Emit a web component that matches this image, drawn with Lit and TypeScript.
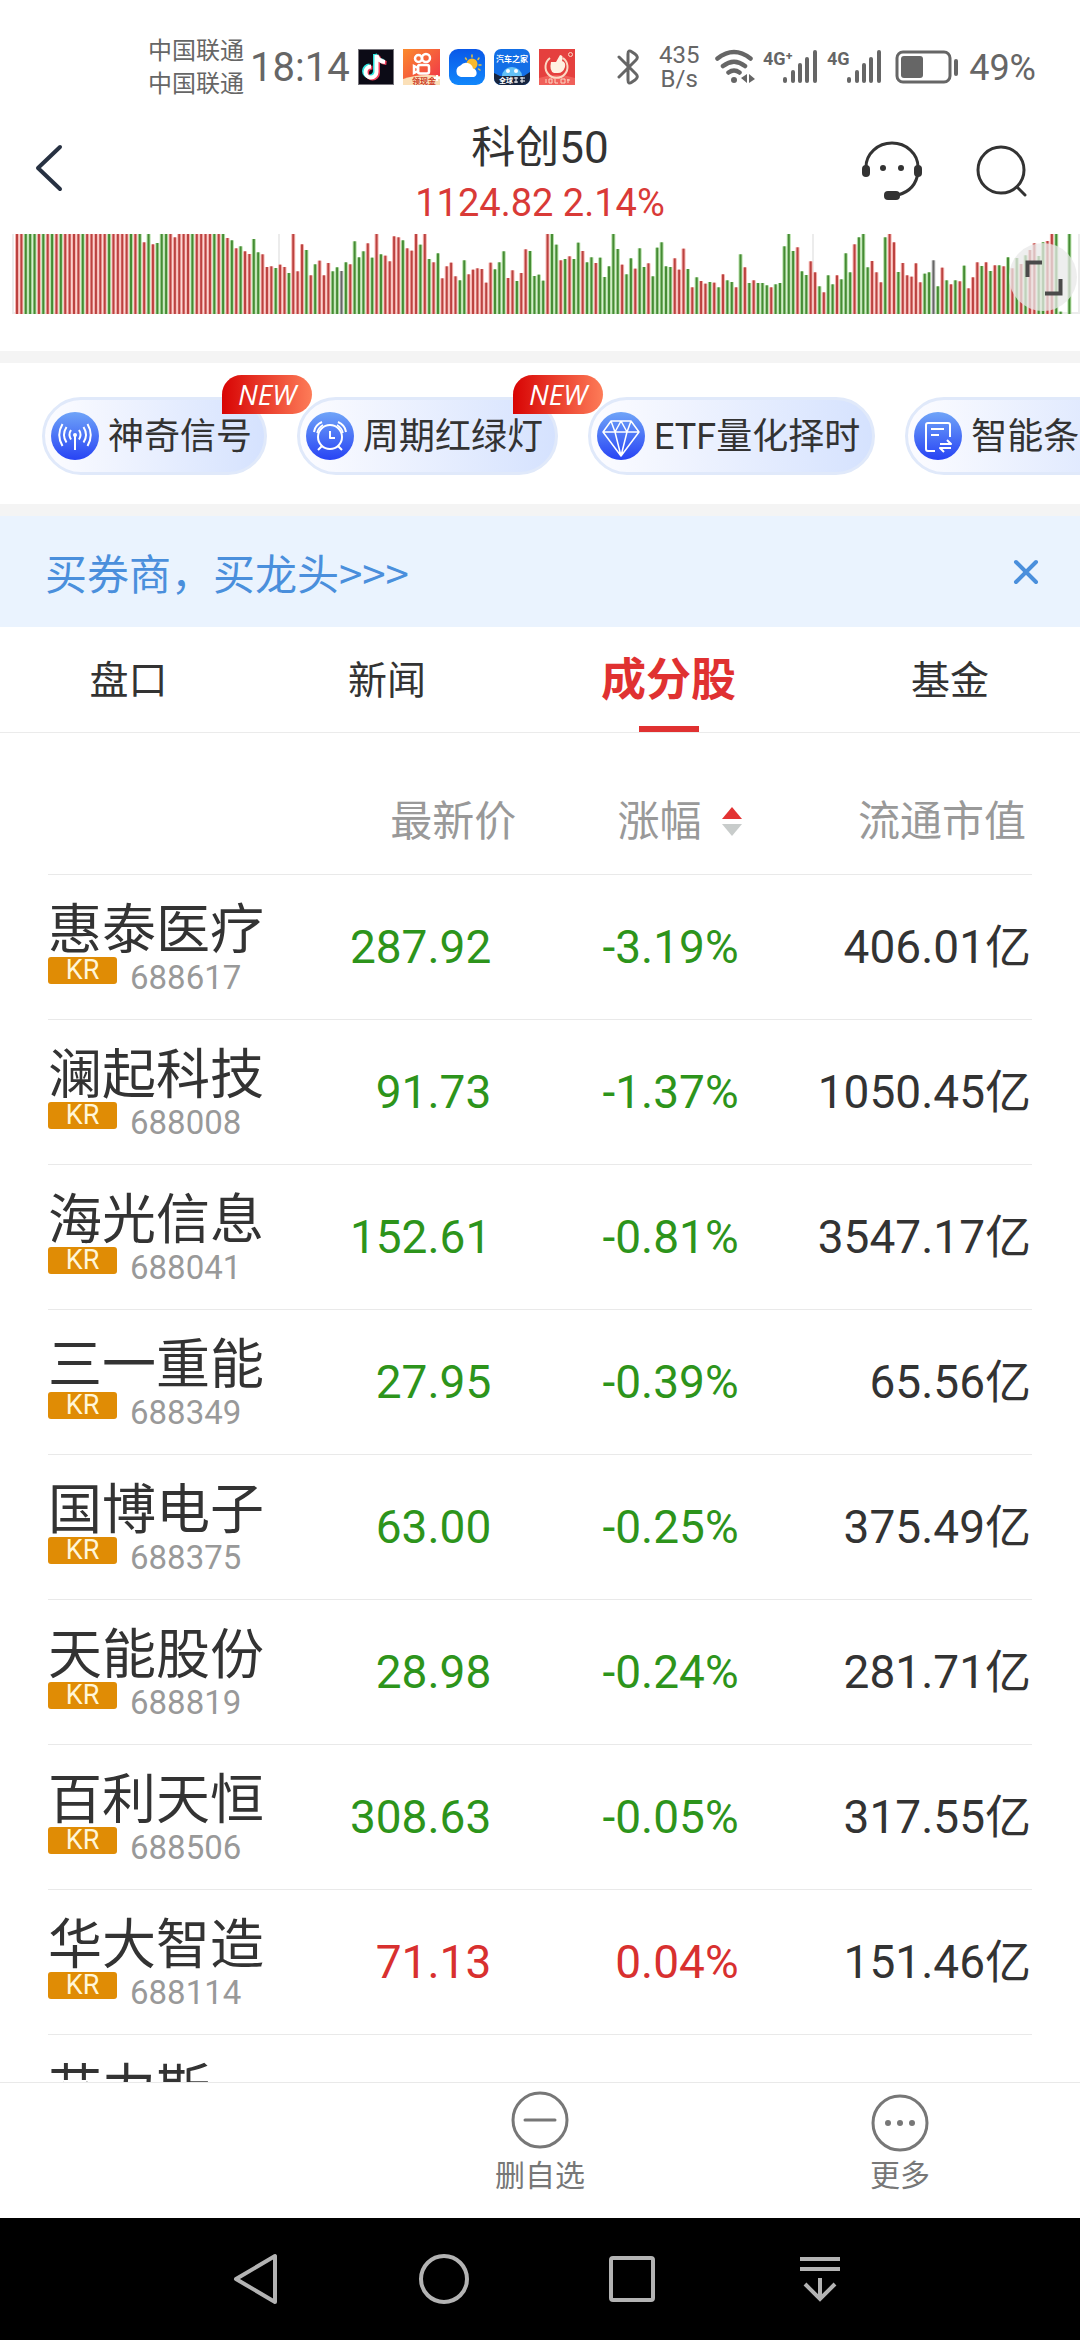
import { LitElement, html, svg, css, nothing } from "lit";
import { customElement, state } from "lit/decorators.js";
import { classMap } from "lit/directives/class-map.js";

interface Stock {
  name: string;
  code: string;
  price: string;
  change: string;
  cap: string;
  trend: "up" | "down";
}

const STOCKS: Stock[] = [
  { name: "惠泰医疗", code: "688617", price: "287.92", change: "-3.19%", cap: "406.01亿", trend: "down" },
  { name: "澜起科技", code: "688008", price: "91.73", change: "-1.37%", cap: "1050.45亿", trend: "down" },
  { name: "海光信息", code: "688041", price: "152.61", change: "-0.81%", cap: "3547.17亿", trend: "down" },
  { name: "三一重能", code: "688349", price: "27.95", change: "-0.39%", cap: "65.56亿", trend: "down" },
  { name: "国博电子", code: "688375", price: "63.00", change: "-0.25%", cap: "375.49亿", trend: "down" },
  { name: "天能股份", code: "688819", price: "28.98", change: "-0.24%", cap: "281.71亿", trend: "down" },
  { name: "百利天恒", code: "688506", price: "308.63", change: "-0.05%", cap: "317.55亿", trend: "down" },
  { name: "华大智造", code: "688114", price: "71.13", change: "0.04%", cap: "151.46亿", trend: "up" },
  { name: "艾力斯", code: "", price: "", change: "", cap: "", trend: "up" },
];

// One entry per minute: direction letter, then the distance of the bar's top
// from the top edge in thirds of a pixel (27 is a full-height bar, 267 an empty one).
const VOLUME = `
r27 r27 g27 g27 g27 r27 g27 r27 g27 r27 g27 r27 r27 r27 r27 g27 r27 r27 r27 r27 r27 g27 r27 r27 r27 r27 g27 r27 g27
r52 g27 r58 g54 g27 g27 r27 r37 r27 r27 r27 g27 r27 r27 r27 r27 g27 r27 g27 r39 g46 r70 g64 r79 r87 g42 g82 r88 r126
r124 g129 r119 r126 g144 r27 r139 r58 g75 r151 g118 r107 r151 r114 g139 g127 k138 g112 r118 g49 g97
g79 r55 g98 r27 g88 r92 r109 r34 r37 g46 r70 r77 r27 g59 r27 g102 r112 g85 r160 r124 r113 r154 g166 g106 r148 r134
r130 r132 r173 r113 g133 g112 g79 r159 r136 g168 r144 r73 g78 g153 g149 g167 r27 g27 g59 r106 g102 r94 g102 g53 r78
g112 g97 r114 g98 g156 g124 g27 g72 r119 g148 g100 r131 g70 g126 r115 g154 g68 g52 g124 g126 r100 r134 r71 g132 r187
g157 r168 r176 g171 r173 g187
r148 g166 g171 r187 g88 r127 g174 r166 g174 g174 g181 r187 g178 g174 g64 g27 g78 r67 g139 g150 r109 r142 g184 r202
g151 g178 r151 g163 g85 g142 r58 g37 g27 g127 r108 r142 r172 g37 r27 r52 g141 r114 r151 r155 r115 r172 g146 g142 k106
g184 r128 g166 r178 g166 r169 g122 r190 r157 r112 g123 r112 g138 r121 g121 r124 g97 r130 g99 r117 g91 r75 r55 g93 g52
r48 r27 g27 g260 g267 g27`
  .trim()
  .split(/\s+/)
  .map((s) => ({ tone: s[0], height: (267 - Number(s.slice(1))) / 3 }));

const TONES: Record<string, [string, string]> = {
  r: ["#bb4240", "#f6b4b0"],
  g: ["#458b34", "#b4dfa6"],
  k: ["#666666", "#d0d0d0"],
};

const FONT = css`
  font-family: Roboto, "Noto Sans CJK SC", sans-serif;
`;

@customElement("phone-status")
class PhoneStatus extends LitElement {
  static styles = css`
    :host {
      display: block;
      color: #666;
      ${FONT}
    }
    .bar {
      display: flex;
      align-items: center;
      height: 66px;
      padding: 34px 44px 0 148px;
    }
    .carriers {
      padding-top: 2px;
      font-size: 24px;
      line-height: 33px;
      white-space: nowrap;
    }
    .time {
      margin-left: 6px;
      padding-top: 2px;
      font-size: 40px;
      line-height: 48px;
    }
    .apps {
      display: flex;
      gap: 9px;
      margin-left: 8px;
    }
    .right {
      display: flex;
      align-items: center;
      margin-left: auto;
    }
    .speed {
      width: 44px;
      margin: 0 14px 0 17px;
      font-size: 24px;
      line-height: 24px;
      text-align: center;
    }
    .percent {
      margin-left: 10px;
      padding-top: 2px;
      font-size: 36px;
      line-height: 42px;
    }
    svg {
      display: block;
      flex: none;
    }
    .signal {
      margin-left: 8px;
    }
    .battery {
      margin-left: 12px;
    }
  `;

  private signal(label: string) {
    return html`<svg class="signal" width="56" height="36" viewBox="0 0 56 36" fill="#666">
      <text x="0" y="16" font-size="18" font-weight="700" font-family="Roboto, sans-serif">${label}</text>
      <rect x="20" y="28" width="4" height="6" rx="2" />
      <rect x="28" y="21" width="4" height="13" rx="2" />
      <rect x="35" y="14" width="4" height="20" rx="2" />
      <rect x="42" y="8" width="4" height="26" rx="2" />
      <rect x="50" y="1" width="4" height="33" rx="2" />
    </svg>`;
  }

  render() {
    return html`<div class="bar">
      <div class="carriers"><div>中国联通</div><div>中国联通</div></div>
      <div class="time">18:14</div>
      <div class="apps">
        <svg width="36" height="36" viewBox="0 0 36 36">
          <rect x=".5" y=".5" width="35" height="35" fill="#0c0b16" stroke="#77757c" />
          <g fill="none" stroke-width="4">
            <path d="M18 6V23a5.500 5.500 0 1 1-5.500-5.500M18 6c1 4.500 4 6.500 8.500 7" stroke="#2fe3df" transform="translate(-1 -1)" />
            <path d="M18 6V23a5.500 5.500 0 1 1-5.500-5.500M18 6c1 4.500 4 6.500 8.500 7" stroke="#f0405c" transform="translate(2 1)" />
            <path d="M18 6V23a5.500 5.500 0 1 1-5.500-5.500M18 6c1 4.500 4 6.500 8.500 7" stroke="#fff" transform="translate(.5 0)" />
          </g>
        </svg>
        <svg width="37" height="36" viewBox="0 0 37 36">
          <defs>
            <linearGradient id="ks" x1="0" y1="0" x2="1" y2="1">
              <stop offset="0" stop-color="#fb8b2c" /><stop offset="1" stop-color="#f0304c" />
            </linearGradient>
          </defs>
          <rect width="37" height="36" fill="url(#ks)" />
          <g fill="none" stroke="#fff" stroke-width="2.500">
            <circle cx="15.500" cy="9.500" r="3.500" /><circle cx="23" cy="9" r="4" />
            <rect x="15" y="16" width="11" height="8.500" rx="2" />
            <path d="M15 19l-4-2v7l4-2z" />
          </g>
          <path d="M0 30q18-6 37-3v9H0z" fill="#fbe0b8" />
          <text x="9" y="35" font-size="8" font-weight="700" fill="#cc3a28" font-family="Noto Sans CJK SC, sans-serif">领现金</text>
          <path d="M34 26v6M31 29h6" stroke="#fff" stroke-width="2" />
        </svg>
        <svg width="36" height="36" viewBox="0 0 36 36">
          <defs>
            <linearGradient id="wx" x1="0" y1="0" x2="0" y2="1">
              <stop offset="0" stop-color="#0a58e8" /><stop offset="1" stop-color="#1187fb" />
            </linearGradient>
          </defs>
          <rect width="36" height="36" rx="9" fill="url(#wx)" />
          <g stroke="#e8c040" stroke-width="1.500" stroke-linecap="round">
            <path d="M23 6v2M30 9l-1 1.500M32 16h-2M16.500 9l1 1.500M31 21l-1.500-1" />
          </g>
          <circle cx="23" cy="15" r="5.500" fill="#f8b92c" />
          <path d="M12 28a6 6 0 0 1-.5-11.500A7 7 0 0 1 24 19.500a4.500 4.500 0 0 1 1 8.500z" fill="#fff" />
        </svg>
        <svg width="36" height="36" viewBox="0 0 36 36">
          <defs><clipPath id="car"><rect width="36" height="36" rx="7" /></clipPath></defs>
          <g clip-path="url(#car)">
            <rect width="36" height="36" fill="#136fe6" />
            <path d="M8 27a10 9 0 0 1 20 0z" fill="#63c1f6" />
            <circle cx="14" cy="22" r="2" fill="#fff" /><circle cx="22" cy="22" r="2" fill="#fff" />
            <path d="M0 24l6 3h24l6-4v13H0z" fill="#17253f" />
            <text x="2" y="13" font-size="8" font-weight="700" fill="#fff" font-family="Noto Sans CJK SC, sans-serif">汽车之家</text>
            <text x="5" y="34" font-size="7" font-weight="700" fill="#fff" font-family="Noto Sans CJK SC, sans-serif">全球</text>
            <path d="M20 29h4M22 28v6M20 33h4M26 29h5M28 28v6M26 32h5" stroke="#fff" />
          </g>
        </svg>
        <svg width="36" height="36" viewBox="0 0 36 36">
          <rect width="36" height="36" fill="#e5403e" />
          <path d="M0 29q18-6 36 0v7H0z" fill="#f0605a" />
          <path d="M11 9a11 11 0 1 0 13 0" fill="none" stroke="#fbd9c4" stroke-width="2" />
          <path d="M12 13h5l4-7q4 0 2 6 4 1 3 6-2 6-7 6h-4q-5-2-3-11z" fill="#fff1e2" />
          <circle cx="31.500" cy="5.500" r="2" fill="none" stroke="#fbd9c4" />
          <path d="M7 30v4M10 30h3v4h-3zM16 30v4h3M22 30h4v4h-4zM28 31h3M29 30v4" stroke="#fbd9c4" fill="none" />
        </svg>
      </div>
      <div class="right">
        <svg width="23" height="36" viewBox="0 0 23 36" fill="none" stroke="#666" stroke-width="3" stroke-linejoin="round" stroke-linecap="round">
          <path d="M2 8l17 17q3 3-1 6l-3 2q-4 3-4-2V5q0-5 4-2l3 2q4 3 1 6L2 28" />
        </svg>
        <div class="speed"><div>435</div><div>B/s</div></div>
        <svg width="40" height="36" viewBox="0 0 40 36" fill="none" stroke="#666" stroke-width="4.500" stroke-linecap="round">
          <path d="M2.500 9.500q16.500-13 33 0M8 17q11-8.500 22 0M13.500 23.500q5.500-4 11 0" />
          <circle cx="19" cy="31" r="3" fill="#666" stroke="none" />
          <path d="M32 25v9l-6-5zM34 34v-9l6 5z" fill="#666" stroke="none" />
        </svg>
        ${this.signal("4G⁺")} ${this.signal("4G")}
        <svg class="battery" width="64" height="36" viewBox="0 0 64 36">
          <rect x="2" y="3" width="53" height="30" rx="6" fill="none" stroke="#666" stroke-width="3" />
          <rect x="6" y="7" width="22" height="22" rx="3" fill="#666" />
          <rect x="59" y="10" width="4" height="17" rx="2" fill="#666" />
        </svg>
        <span class="percent">49%</span>
      </div>
    </div>`;
  }
}

@customElement("volume-chart")
class VolumeChart extends LitElement {
  static styles = css`
    :host {
      display: block;
      position: relative;
    }
    .plot {
      display: block;
      width: 100%;
      height: 80px;
    }
    .expand {
      position: absolute;
      top: 9px;
      right: 3px;
      width: 68px;
      height: 68px;
      padding: 0;
      border: 0;
      border-radius: 50%;
      background: rgba(232, 232, 232, 0.75);
    }
    .expand svg {
      display: block;
    }
  `;

  render() {
    const x = (i: number) => 17 + i * 4.385;
    return html`<svg class="plot" viewBox="0 0 1080 80" preserveAspectRatio="none" role="img" aria-label="成交量">
        ${[13, 279, 813, 1079].map((g) => svg`<rect x=${g - 1} y="0" width="2" height="80" fill="#ececec" />`)}
        <rect x="12" y="78" width="1068" height="2" fill="#ececec" />
        ${VOLUME.map(
          (b, i) => svg`<rect x=${x(i) - 2} y=${80 - b.height} width="4" height=${b.height} fill=${TONES[b.tone][1]} />
            <rect x=${x(i) - 1} y=${80 - b.height} width="2" height=${b.height} fill=${TONES[b.tone][0]} />`
        )}
      </svg>
      <button class="expand" aria-label="全屏">
        <svg width="68" height="68" viewBox="0 0 68 68" fill="none" stroke="#4a4a4a" stroke-width="4">
          <path d="M18.500 34V19.500H33M51.500 36v14.500H36" />
        </svg>
      </button>`;
  }
}

const CHIP_ICONS = {
  signal: svg`<circle cx="24" cy="23" r="2" fill="#fff" stroke="none" /><path d="M24 24v14" />
    <path d="M20 18q-3 4.500 0 9.500M28 18q3 4.500 0 9.500M15.500 15q-5 8 0 15.500M32.500 15q5 8 0 15.500M11.500 12q-6.500 11 0 22M36.500 12q6.500 11 0 22" />`,
  clock: svg`<circle cx="24" cy="25" r="12" /><path d="M24 19v7h5M16 34l-4 4M32 34l4 4M8 20q1-7 8-10M40 20q-1-7-8-10" />
    <path d="M11 21q1-5 6-8M37 21q-1-5-6-8" stroke-width="1.500" />`,
  diamond: svg`<path d="M14 9h20l8 11-18 24L6 20zM6 20h36M14 9l4 11 6-11 6 11 4-11M18 20l6 24 6-24" stroke-width="1.500" />`,
  sheet: svg`<path d="M21 39h-7a2 2 0 0 1-2-2V13a2 2 0 0 1 2-2h20a2 2 0 0 1 2 2v12M17 17h13M17 23h8" />
    <path d="M26 32h11l-4-4M37 36H26l4 4" />`,
};

const CHIPS: { label: string; icon: keyof typeof CHIP_ICONS; fresh: boolean }[] = [
  { label: "神奇信号", icon: "signal", fresh: true },
  { label: "周期红绿灯", icon: "clock", fresh: true },
  { label: "ETF量化择时", icon: "diamond", fresh: false },
  { label: "智能条件单", icon: "sheet", fresh: false },
];

@customElement("tool-chips")
class ToolChips extends LitElement {
  static styles = css`
    :host {
      display: block;
      overflow: hidden;
    }
    .row {
      display: flex;
      gap: 30px;
      padding: 34px 42px 29px;
    }
    .chip {
      position: relative;
      flex: none;
      display: flex;
      align-items: center;
      gap: 9px;
      height: 78px;
      padding: 0 12px 0 6px;
      border: 3px solid #e0e9fa;
      border-radius: 39px;
      background: linear-gradient(90deg, #fcfcff, #d5e2fe);
      color: #333;
      ${FONT}
      font-size: 36px;
      line-height: 50px;
      white-space: nowrap;
    }
    .label {
      padding-top: 2px;
    }
    .disc {
      width: 48px;
      height: 48px;
      border-radius: 50%;
      background: linear-gradient(#6fa4f8, #2743f4);
    }
    .disc svg {
      display: block;
      fill: none;
      stroke: #fff;
      stroke-width: 2;
      stroke-linejoin: round;
    }
    .badge {
      position: absolute;
      top: -25px;
      right: -48px;
      z-index: 1;
      width: 90px;
      border-radius: 20px 20px 20px 0;
      background: linear-gradient(90deg, #d80404, #fd7c58);
      color: #fff;
      font-family: "Open Sans", sans-serif;
      font-size: 28px;
      line-height: 39px;
      font-style: italic;
      font-weight: 500;
      text-align: center;
    }
  `;

  render() {
    return html`<div class="row">
      ${CHIPS.map(
        (c) => html`<button class="chip">
          <span class="disc"><svg width="48" height="48" viewBox="0 0 48 48">${CHIP_ICONS[c.icon]}</svg></span>
          <span class="label">${c.label}</span>
          ${c.fresh ? html`<span class="badge">NEW</span>` : nothing}
        </button>`
      )}
    </div>`;
  }
}

@customElement("stock-table")
class StockTable extends LitElement {
  static styles = css`
    :host {
      display: block;
      padding: 36px 48px 0;
      ${FONT}
    }
    .table {
      width: 100%;
      table-layout: fixed;
      border-collapse: separate;
      border-spacing: 0;
      color: #333;
    }
    .name-col {
      width: 22%;
    }
    .price-col {
      width: 26%;
    }
    .change-col {
      width: 23%;
    }
    .head {
      height: 106px;
      padding: 0;
      border-bottom: 1px solid #e9e9e9;
      color: #999;
      font-size: 42px;
      font-weight: 400;
      line-height: 60px;
      text-align: right;
      box-sizing: border-box;
      white-space: nowrap;
    }
    .head-price {
      padding-right: 4px;
    }
    .head-change {
      padding-right: 5px;
    }
    .head-cap {
      padding-right: 6px;
    }
    .sort {
      display: inline-flex;
      align-items: center;
      gap: 20px;
      padding: 0;
      border: 0;
      background: none;
      color: inherit;
      font: inherit;
    }
    .cell {
      height: 145px;
      padding: 0;
      border-bottom: 1px solid #e9e9e9;
      box-sizing: border-box;
      font-size: 46px;
      line-height: 60px;
      text-align: right;
      white-space: nowrap;
    }
    .title {
      padding-top: 30px;
      font-weight: 400;
      text-align: left;
      vertical-align: top;
    }
    .name {
      font-size: 54px;
      line-height: 52px;
    }
    .meta {
      display: flex;
      align-items: flex-start;
      gap: 13px;
    }
    .tag {
      width: 69px;
      border-radius: 3px;
      background: #e08c05;
      color: #fff6d8;
      font-size: 27px;
      line-height: 27px;
      text-align: center;
    }
    .code {
      color: #999;
      font-size: 33px;
      line-height: 42px;
    }
    .price {
      padding-right: 29px;
    }
    .change {
      padding-right: 8px;
    }
    .cap {
      padding-right: 1px;
    }
    .up {
      color: #d8302f;
    }
    .down {
      color: #2d941b;
    }
  `;

  render() {
    return html`<table class="table">
      <colgroup>
        <col class="name-col" /><col class="price-col" /><col class="change-col" /><col />
      </colgroup>
      <thead>
        <tr>
          <td class="head"></td>
          <th class="head head-price" scope="col">最新价</th>
          <th class="head head-change" scope="col">
            <button class="sort">涨幅
              <svg width="20" height="30" viewBox="0 0 20 30"><path d="M10 0l10 12H0z" fill="#e23333" /><path d="M0 17h20L10 29z" fill="#c8cccb" /></svg>
            </button>
          </th>
          <th class="head head-cap" scope="col">流通市值</th>
        </tr>
      </thead>
      <tbody>
        ${STOCKS.map(
          (s) => html`<tr>
            <th class="cell title" scope="row">
              <div class="name">${s.name}</div>
              ${s.code ? html`<div class="meta"><span class="tag">KR</span><span class="code">${s.code}</span></div>` : nothing}
            </th>
            <td class=${classMap({ cell: true, price: true, [s.trend]: true })}>${s.price}</td>
            <td class=${classMap({ cell: true, change: true, [s.trend]: true })}>${s.change}</td>
            <td class="cell cap">${s.cap}</td>
          </tr>`
        )}
      </tbody>
    </table>`;
  }
}

const TABS = ["盘口", "新闻", "成分股", "基金"];

@customElement("app-root")
class AppRoot extends LitElement {
  static styles = css`
    :host {
      display: flex;
      flex-direction: column;
      height: 100vh;
      overflow: hidden;
      background: #fff;
      color: #333;
      ${FONT}
    }
    button {
      margin: 0;
      padding: 0;
      border: 0;
      background: none;
      color: inherit;
      font: inherit;
    }
    svg {
      display: block;
      overflow: visible;
    }
    .top {
      display: grid;
      grid-template-columns: 1fr auto 1fr;
      padding: 21px 32px 3px;
    }
    .back {
      height: 94px;
      justify-self: start;
    }
    .heading {
      text-align: center;
    }
    .index {
      margin: 0;
      font-size: 44px;
      font-weight: 400;
      line-height: 55px;
    }
    .quote {
      color: #d93a37;
      font-size: 38px;
      line-height: 55px;
    }
    .actions {
      display: flex;
      align-items: center;
      justify-content: flex-end;
      gap: 54px;
      height: 100px;
      padding-right: 21px;
    }
    .chart {
      padding-bottom: 37px;
    }
    .divider {
      height: 12px;
      background: #f4f4f4;
    }
    .notice {
      display: flex;
      align-items: center;
      justify-content: space-between;
      height: 111px;
      padding: 0 40px 0 45px;
      background: #eaf3fe;
      color: #4a8fdc;
      font-family: "Noto Sans CJK SC", sans-serif;
      font-size: 42px;
      line-height: 60px;
    }
    .notice a {
      color: inherit;
      text-decoration: none;
    }
    .tabs {
      display: grid;
      grid-template-columns: 257fr 260fr 303fr 260fr;
      height: 105px;
      border-bottom: 1px solid #ebebeb;
      font-size: 39px;
    }
    .tab {
      display: flex;
      flex-direction: column;
      align-items: center;
      padding-top: 9px;
      line-height: 90px;
      color: #333;
    }
    .tab.active {
      color: #e03131;
      font-size: 45px;
      font-weight: 700;
    }
    .tab.active::after {
      content: "";
      width: 60px;
      height: 6px;
      background: #e03131;
    }
    .list {
      flex: 1;
      min-height: 0;
      overflow: hidden;
    }
    .tools {
      display: grid;
      grid-template-columns: repeat(3, 1fr);
      height: 135px;
      border-top: 1px solid #e9e9e9;
      color: #777;
      font-size: 30px;
      line-height: 42px;
    }
    .tool {
      display: flex;
      flex-direction: column;
      align-items: center;
      gap: 6px;
      padding-top: 8px;
    }
    .system {
      display: grid;
      grid-template-columns: repeat(4, 188px);
      align-items: center;
      justify-content: center;
      height: 122px;
      padding-right: 4px;
      background: #000;
    }
    .system button {
      justify-self: center;
    }
  `;

  @state() private active = 2;
  @state() private noticeOpen = true;

  render() {
    return html`
      <phone-status></phone-status>
      <header class="top">
        <button class="back" aria-label="返回">
          <svg width="34" height="50" viewBox="0 0 34 50" fill="none" stroke="#273142" stroke-width="4" stroke-linecap="round" stroke-linejoin="round"><path d="M28 4L6 25l22 21" /></svg>
        </button>
        <div class="heading">
          <h1 class="index">科创50</h1>
          <div class="quote">1124.82 2.14%</div>
        </div>
        <div class="actions">
          <button aria-label="客服">
            <svg width="62" height="60" viewBox="0 0 62 60" fill="none" stroke="#333" stroke-width="3">
              <path d="M5 26a26 24 0 0 1 52 0v5q-2 18-20 23" />
              <rect x="1" y="24" width="8" height="12" rx="4" fill="#333" stroke="none" />
              <rect x="53" y="24" width="8" height="12" rx="4" fill="#333" stroke="none" />
              <rect x="23" y="50" width="16" height="9" rx="4" fill="#333" stroke="none" />
              <circle cx="22" cy="27" r="3" fill="#333" stroke="none" /><circle cx="40" cy="27" r="3" fill="#333" stroke="none" />
            </svg>
          </button>
          <button aria-label="搜索">
            <svg width="50" height="52" viewBox="0 0 50 52" fill="none" stroke="#333" stroke-width="3" stroke-linecap="round"><circle cx="24" cy="25" r="23" /><path d="M40 42l8 8" /></svg>
          </button>
        </div>
      </header>
      <div class="chart"><volume-chart></volume-chart></div>
      <div class="divider"></div>
      <tool-chips></tool-chips>
      <div class="divider"></div>
      ${this.noticeOpen
        ? html`<div class="notice">
            <a href="#">买券商，买龙头&gt;&gt;&gt;</a>
            <button aria-label="关闭" @click=${() => (this.noticeOpen = false)}>
              <svg width="28" height="28" viewBox="0 0 28 28" stroke="#4a8fdc" stroke-width="4" stroke-linecap="round"><path d="M4 4l20 20M24 4L4 24" /></svg>
            </button>
          </div>`
        : nothing}
      <nav class="tabs">
        ${TABS.map(
          (t, i) => html`<button class=${classMap({ tab: true, active: i === this.active })} @click=${() => (this.active = i)}>${t}</button>`
        )}
      </nav>
      <main class="list"><stock-table></stock-table></main>
      <div class="tools">
        <span></span>
        <button class="tool">
          <svg width="58" height="58" viewBox="0 0 58 58" fill="none" stroke="#777" stroke-width="3" stroke-linecap="round"><circle cx="29" cy="29" r="27" /><path d="M14 29h30" /></svg>
          删自选
        </button>
        <button class="tool">
          <svg width="58" height="58" viewBox="0 0 58 58"><circle cx="29" cy="32" r="27" fill="none" stroke="#777" stroke-width="3" /><g fill="#777"><circle cx="17" cy="32" r="3" /><circle cx="29" cy="32" r="3" /><circle cx="41" cy="32" r="3" /></g></svg>
          更多
        </button>
      </div>
      <nav class="system">
        <button aria-label="后退"><svg width="50" height="52" viewBox="0 0 50 52" fill="none" stroke="#b3b3b3" stroke-width="4" stroke-linejoin="round"><path d="M44 3v46L5 26z" /></svg></button>
        <button aria-label="主屏幕"><svg width="52" height="52" viewBox="0 0 52 52" fill="none" stroke="#b3b3b3" stroke-width="4"><circle cx="26" cy="26" r="23" /></svg></button>
        <button aria-label="最近任务"><svg width="46" height="46" viewBox="0 0 46 46" fill="none" stroke="#b3b3b3" stroke-width="4"><rect x="2" y="2" width="42" height="42" rx="2" /></svg></button>
        <button aria-label="下拉通知"><svg width="42" height="46" viewBox="0 0 42 46" fill="none" stroke="#b3b3b3" stroke-width="4"><path d="M1 3h40M1 13h40M21 22v20M6 28l15 15 15-15" /></svg></button>
      </nav>
    `;
  }
}
